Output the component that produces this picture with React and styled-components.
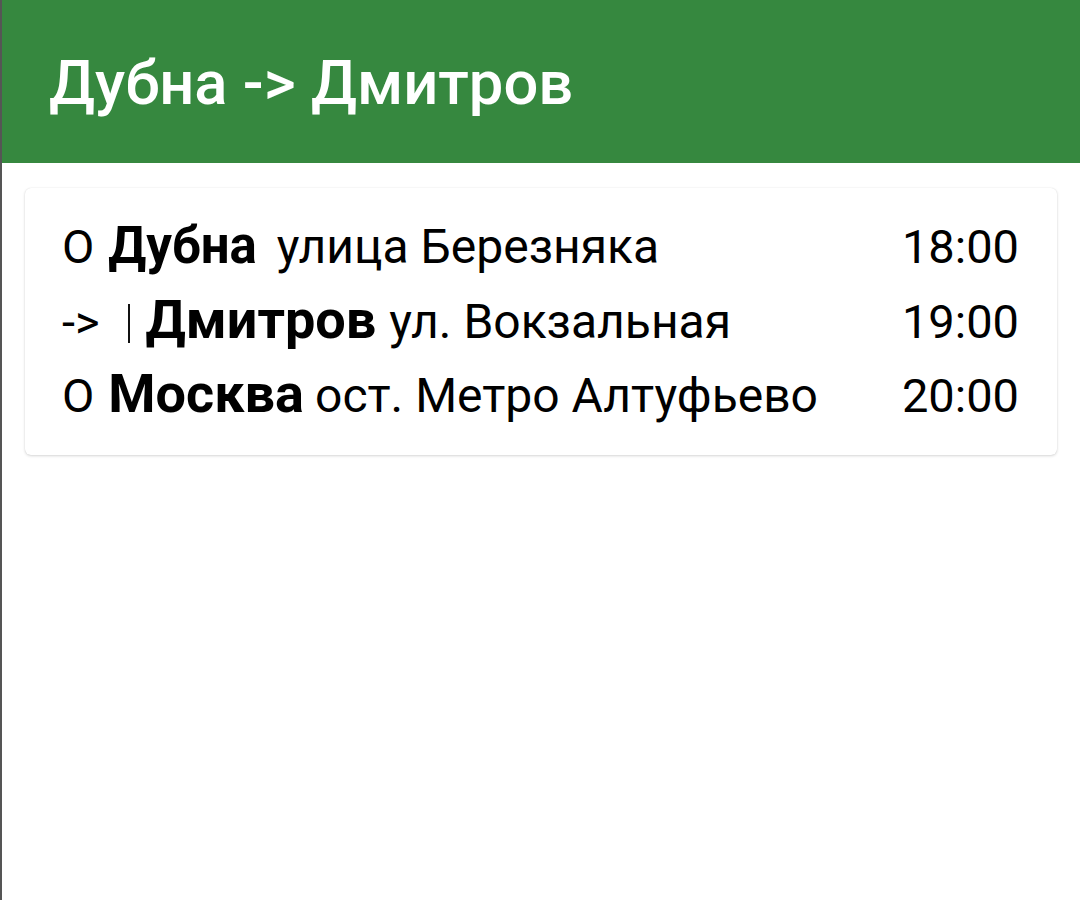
import React from "react";
import styled, { createGlobalStyle } from "styled-components";

const Global = createGlobalStyle`
  html, body { margin: 0; padding: 0; background: #ffffff; }
  body { font-family: Roboto, "Noto Sans", sans-serif; color: #000; }
`;

const Page = styled.div`
  min-height: 900px;
  border-left: 2px solid #555555;
  box-sizing: border-box;
  background: #ffffff;
`;

const Header = styled.header`
  height: 163px;
  background: #36883f;
  display: flex;
  align-items: center;
  padding: 0 0 0 47px;
  box-sizing: border-box;
`;

const Title = styled.h1`
  margin: 0;
  font-family: Roboto, sans-serif;
  font-weight: 500;
  font-size: 61.5px;
  color: #ffffff;
  padding-top: 2px;
`;

const Content = styled.main`
  padding: 25px 23px 0 23px;
`;

const Card = styled.section`
  background: #fff;
  border-radius: 6px;
  box-shadow: 0 1px 3px rgba(0, 0, 0, 0.16), 0 0 1px rgba(0, 0, 0, 0.12);
  padding: 21px 38px 24px 37px;
  display: flex;
  flex-direction: column;
`;

const Row = styled.div`
  display: flex;
  justify-content: space-between;
  align-items: baseline;
  height: 74px;
  line-height: 74px;
`;

const Stop = styled.div`
  display: flex;
  align-items: baseline;
  white-space: nowrap;
  font-size: 48px;
`;

const Marker = styled.span`
  font-size: 47px;
  font-weight: 400;
  margin-right: 14px;
`;

const Bar = styled.span`
  display: inline-block;
  width: 2px;
  height: 39px;
  background: #111;
  margin: 0 16px 0 14px;
  transform: translateY(5px);
`;

const City = styled.span`
  font-weight: 700;
  font-size: ${(p) => p.$size}px;
  margin-right: ${(p) => p.$gap}px;
`;

const Place = styled.span`
  font-weight: 400;
`;

const Time = styled.span`
  font-weight: 400;
  font-size: 47px;
`;

const stops = [
  { marker: "О", city: "Дубна", size: 51, gap: 20, place: "улица Березняка", time: "18:00" },
  { marker: "->", bar: true, city: "Дмитров", size: 54, gap: 13, place: "ул. Вокзальная", time: "19:00" },
  { marker: "О", city: "Москва", size: 54, gap: 11, place: "ост. Метро Алтуфьево", time: "20:00" },
];

export default function App() {
  return (
    <Page>
      <Global />
      <Header>
        <Title>Дубна -&gt; Дмитров</Title>
      </Header>
      <Content>
        <Card>
          {stops.map((s) => (
            <Row key={s.time}>
              <Stop>
                <Marker>{s.marker}</Marker>
                {s.bar && <Bar />}
                <City $size={s.size} $gap={s.gap}>
                  {s.city}
                </City>
                <Place>{s.place}</Place>
              </Stop>
              <Time>{s.time}</Time>
            </Row>
          ))}
        </Card>
      </Content>
    </Page>
  );
}
